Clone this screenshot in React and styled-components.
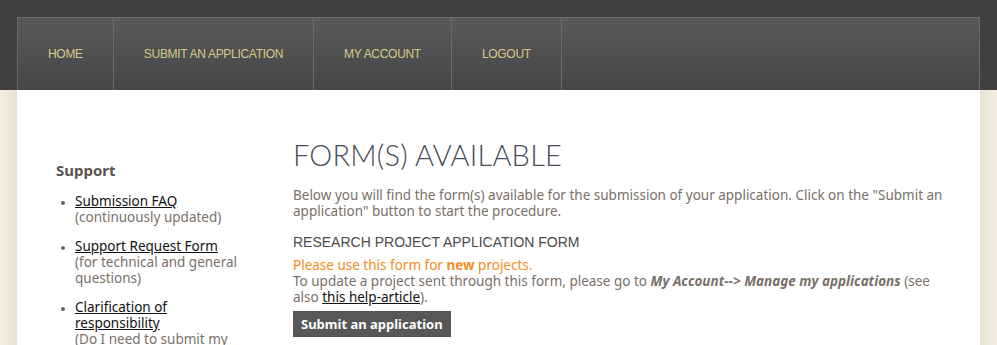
import React from "react";
import styled, { createGlobalStyle } from "styled-components";

const GlobalStyle = createGlobalStyle`
  html, body {
    margin: 0;
    padding: 0;
  }
  body {
    background: linear-gradient(to right, #f2f0e6 0px, #e6e2d1 17px, #e6e2d1 980px, #f2f0e6 997px);
    font-family: "Noto Sans", "Open Sans", sans-serif;
    font-size: 13.5px;
    color: #7a7068;
  }
`;

const TopBand = styled.header`
  background: #404040;
  height: 90px;
  padding-top: 17px;
  box-sizing: border-box;
`;

const Nav = styled.nav`
  width: 963px;
  height: 73px;
  margin: 0 auto;
  box-sizing: border-box;
  display: flex;
  background: linear-gradient(to bottom, #595959, #464646);
  border: 1px solid #6b6b6b;
  border-bottom: none;
`;

const NavItem = styled.a`
  display: flex;
  align-items: center;
  padding: 0 30px;
  border-right: 1px solid #6b6b6b;
  color: #d4ca8c;
  font-family: "Liberation Sans", Arial, sans-serif;
  font-size: 12px;
  text-transform: uppercase;
  text-decoration: none;
  letter-spacing: -0.3px;
`;

const Page = styled.main`
  width: 963px;
  height: 255px;
  margin: 0 auto;
  background: #fff;
  display: flex;
  box-sizing: border-box;
  padding: 48px 36px 0 39px;
  overflow: hidden;
`;

const Sidebar = styled.aside`
  width: 237px;
  flex-shrink: 0;
`;

const SideTitle = styled.h3`
  margin: 23px 0 14px;
  font-size: 15px;
  font-weight: bold;
  color: #5a5450;
  line-height: 18px;
`;

const SideList = styled.ul`
  margin: 0;
  padding-left: 19px;
  width: 172px;
  line-height: 16px;
  list-style: disc;
  li {
    margin-bottom: 13px;
  }
  li::marker {
    color: #666;
    font-size: 10px;
  }
`;

const Link = styled.a`
  color: #111;
  text-decoration: underline;
`;

const Content = styled.section`
  flex: 1;
`;

const Title = styled.h1`
  margin: 0 0 15px;
  font-family: "Lato", sans-serif;
  font-weight: 300;
  font-size: 29px;
  line-height: 34px;
  letter-spacing: 0.2px;
  color: #474c58;
`;

const Text = styled.p`
  margin: 0;
  line-height: 16px;
  color: ${(p) => p.$color || "#7a7068"};
`;

const FormTitle = styled.h2`
  margin: 15px 0 7px;
  font-family: "Liberation Sans", Arial, sans-serif;
  font-weight: normal;
  font-size: 14px;
  line-height: 16px;
  color: #4a4a4a;
`;

const Strong = styled.b`
  font-weight: bold;
  font-style: ${(p) => (p.$italic ? "italic" : "normal")};
  color: ${(p) => p.$color || "inherit"};
`;

const Button = styled.button`
  margin-top: 6px;
  background: #575757;
  color: #fff;
  border: none;
  font-family: "Noto Sans", sans-serif;
  font-weight: bold;
  font-size: 13px;
  padding: 5px 8px;
  line-height: 16px;
  cursor: pointer;
`;

const navItems = ["Home", "Submit an application", "My account", "Logout"];

export default function App() {
  return (
    <>
      <GlobalStyle />
      <TopBand>
        <Nav>
          {navItems.map((n) => (
            <NavItem key={n} href="#">
              {n}
            </NavItem>
          ))}
        </Nav>
      </TopBand>
      <Page>
        <Sidebar>
          <SideTitle>Support</SideTitle>
          <SideList>
            <li>
              <Link href="#">Submission FAQ</Link>
              <br />
              (continuously updated)
            </li>
            <li>
              <Link href="#">Support Request Form</Link>
              <br />
              (for technical and general questions)
            </li>
            <li>
              <Link href="#">Clarification of responsibility</Link>
              <br />
              (Do I need to submit my application?)
            </li>
          </SideList>
        </Sidebar>
        <Content>
          <Title>FORM(S) AVAILABLE</Title>
          <Text>
            Below you will find the form(s) available for the submission of your application. Click on the
            "Submit an application" button to start the procedure.
          </Text>
          <FormTitle>RESEARCH PROJECT APPLICATION FORM</FormTitle>
          <Text $color="#f48c22">
            Please use this form for <Strong>new</Strong> projects.
          </Text>
          <Text>
            To update a project sent through this form, please go to{" "}
            <Strong $italic>My Account--&gt; Manage my applications</Strong> (see also{" "}
            <Link href="#">this help-article</Link>).
          </Text>
          <Button>Submit an application</Button>
        </Content>
      </Page>
    </>
  );
}
